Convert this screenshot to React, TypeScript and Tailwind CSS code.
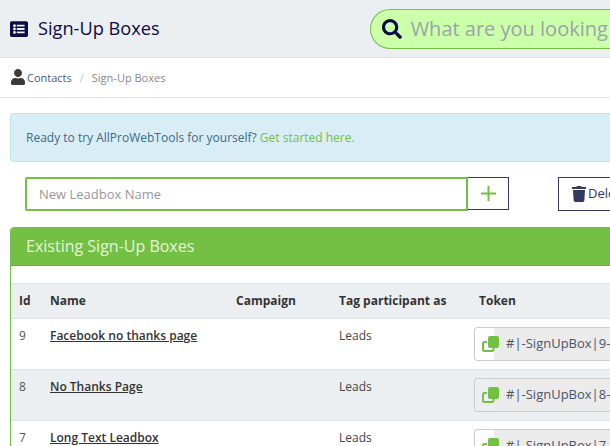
import { FaListAlt, FaSearch, FaUser, FaTrash } from "react-icons/fa";

const rows = [
  { id: 9, name: "Facebook no thanks page", token: "#|-SignUpBox|9-|#", alt: false },
  { id: 8, name: "No Thanks Page", token: "#|-SignUpBox|8-|#", alt: true },
  { id: 7, name: "Long Text Leadbox", token: "#|-SignUpBox|7-|#", alt: false },
];

function CopyIcon() {
  return (
    <svg width="17" height="16" viewBox="0 0 17 16" className="shrink-0">
      <path d="M5 6H2.500a1.500 1.500 0 0 0-1.500 1.500V13.500A1.500 1.500 0 0 0 2.500 15H10a1.500 1.500 0 0 0 1.500-1.500V12" fill="none" stroke="#73c044" strokeWidth="2" />
      <rect x="6" y="0" width="11" height="12" rx="2" fill="#73c044" />
    </svg>
  );
}

function PlusIcon() {
  return (
    <svg width="15" height="15" viewBox="0 0 15 15">
      <path d="M7.500 0V15M0 7.500H15" stroke="#73c044" strokeWidth="2" fill="none" />
    </svg>
  );
}

export default function App() {
  return (
    <div className="h-[446px] w-[610px] overflow-hidden bg-white font-['Open_Sans',sans-serif] text-[#444]">
      <header className="flex h-[58px] items-center border-b border-[#dfe2e4] bg-[#eceff1]">
        <FaListAlt className="ml-[10px] shrink-0 text-[18px] text-[#0b0b45]" />
        <h1 className="ml-[10px] shrink-0 text-[18.2px] leading-none text-[#0b0b45]">Sign-Up Boxes</h1>
        <div className="ml-[210px] flex h-[40px] w-[240px] shrink-0 items-center overflow-hidden rounded-l-[20px] border border-r-0 border-[#73c044] bg-[#ccffaa] pl-[11px]">
          <FaSearch className="shrink-0 text-[20px] text-[#0b0b45]" />
          <span className="ml-[9px] whitespace-nowrap text-[20px] leading-none text-[#9aa3a8]">What are you looking for?</span>
        </div>
      </header>

      <nav className="flex h-[40px] items-center border-b border-[#e2e2e2] pl-[10px] pt-[1px] text-[11px]">
        <FaUser className="mb-[2px] text-[16px] text-[#3a3a3a]" />
        <span className="ml-[1px] text-[#4a5a78]">Contacts</span>
        <span className="ml-[8px] text-[#c4c4c4]">/</span>
        <span className="ml-[8px] text-[#888]">Sign-Up Boxes</span>
      </nav>

      <div className="ml-[10px] mt-[15px] flex h-[49px] w-[600px] items-center rounded-l border border-r-0 border-[#bce3ef] bg-[#d9edf7] pl-[15px] text-[12px] text-[#3d6a85]">
        Ready to try AllProWebTools for yourself?&nbsp;<span className="text-[#73c044]">Get started here.</span>
      </div>

      <div className="ml-[25px] mt-[15px] flex w-[585px] items-start overflow-hidden">
        <div className="flex h-[34px] w-[443px] shrink-0 items-center rounded-l-[2px] border-2 border-[#73c044] pl-[12px] pt-[1px] text-[13px] text-[#999]">New Leadbox Name</div>
        <button className="flex h-[33px] w-[41px] shrink-0 items-center justify-center border border-l-0 border-[#333a5e]"><PlusIcon /></button>
        <button className="ml-[49px] flex h-[34px] w-[80px] shrink-0 items-center border border-r-0 border-[#333a5e] pl-[12px] text-[13px] text-[#333a5e]">
          <FaTrash className="shrink-0 text-[16px]" />
          <span className="ml-[1px]">Delete</span>
        </button>
      </div>

      <section className="ml-[10px] mt-[16px] w-[600px] rounded-tl border-l border-[#73c044]">
        <div className="flex h-[39px] items-center rounded-tl border-b border-[#68b03c] bg-[#73c044] pl-[15px] text-[16px] text-[#e6f5dc]">Existing Sign-Up Boxes</div>
        <div className="h-[17px]" />
        <table className="w-[599px] table-fixed border-collapse text-left text-[12px]">
          <colgroup>
            <col className="w-[31px]" />
            <col className="w-[186px]" />
            <col className="w-[103px]" />
            <col className="w-[140px]" />
            <col className="w-[139px]" />
          </colgroup>
          <thead>
            <tr className="h-[35px] border-y border-[#dfe2e4] bg-[#eceff1] font-bold text-[#333]">
              <th className="pl-[8px]">Id</th>
              <th className="pl-[8px]">Name</th>
              <th className="pl-[8px]">Campaign</th>
              <th className="pl-[8px]">Tag participant as</th>
              <th className="pl-[8px]">Token</th>
            </tr>
          </thead>
          <tbody>
            {rows.map((r) => (
              <tr key={r.id} className={`h-[51px] border-b border-[#dfe2e4] align-top ${r.alt ? "bg-[#eceff1]" : "bg-white"}`}>
                <td className="pl-[8px] pt-[8px] text-[#555]">{r.id}</td>
                <td className="pl-[8px] pt-[8px]"><a className="font-semibold text-[#333] underline">{r.name}</a></td>
                <td />
                <td className="pl-[8px] pt-[8px]">Leads</td>
                <td className="pl-[3px] pt-[8px]">
                  <div className="flex h-[34px] w-[136px] items-center overflow-hidden rounded-l border border-r-0 border-[#ccc] bg-[#ebebeb]">
                    <span className={`flex h-full w-[19px] shrink-0 items-center pl-[7px] ${r.alt ? "bg-[#eceff1]" : "bg-white"}`}>
                      <span className="-mr-[6px]"><CopyIcon /></span>
                    </span>
                    <span className="ml-[12px] whitespace-nowrap text-[13px] text-[#4a5568]">{r.token}</span>
                  </div>
                </td>
              </tr>
            ))}
          </tbody>
        </table>
      </section>
    </div>
  );
}
